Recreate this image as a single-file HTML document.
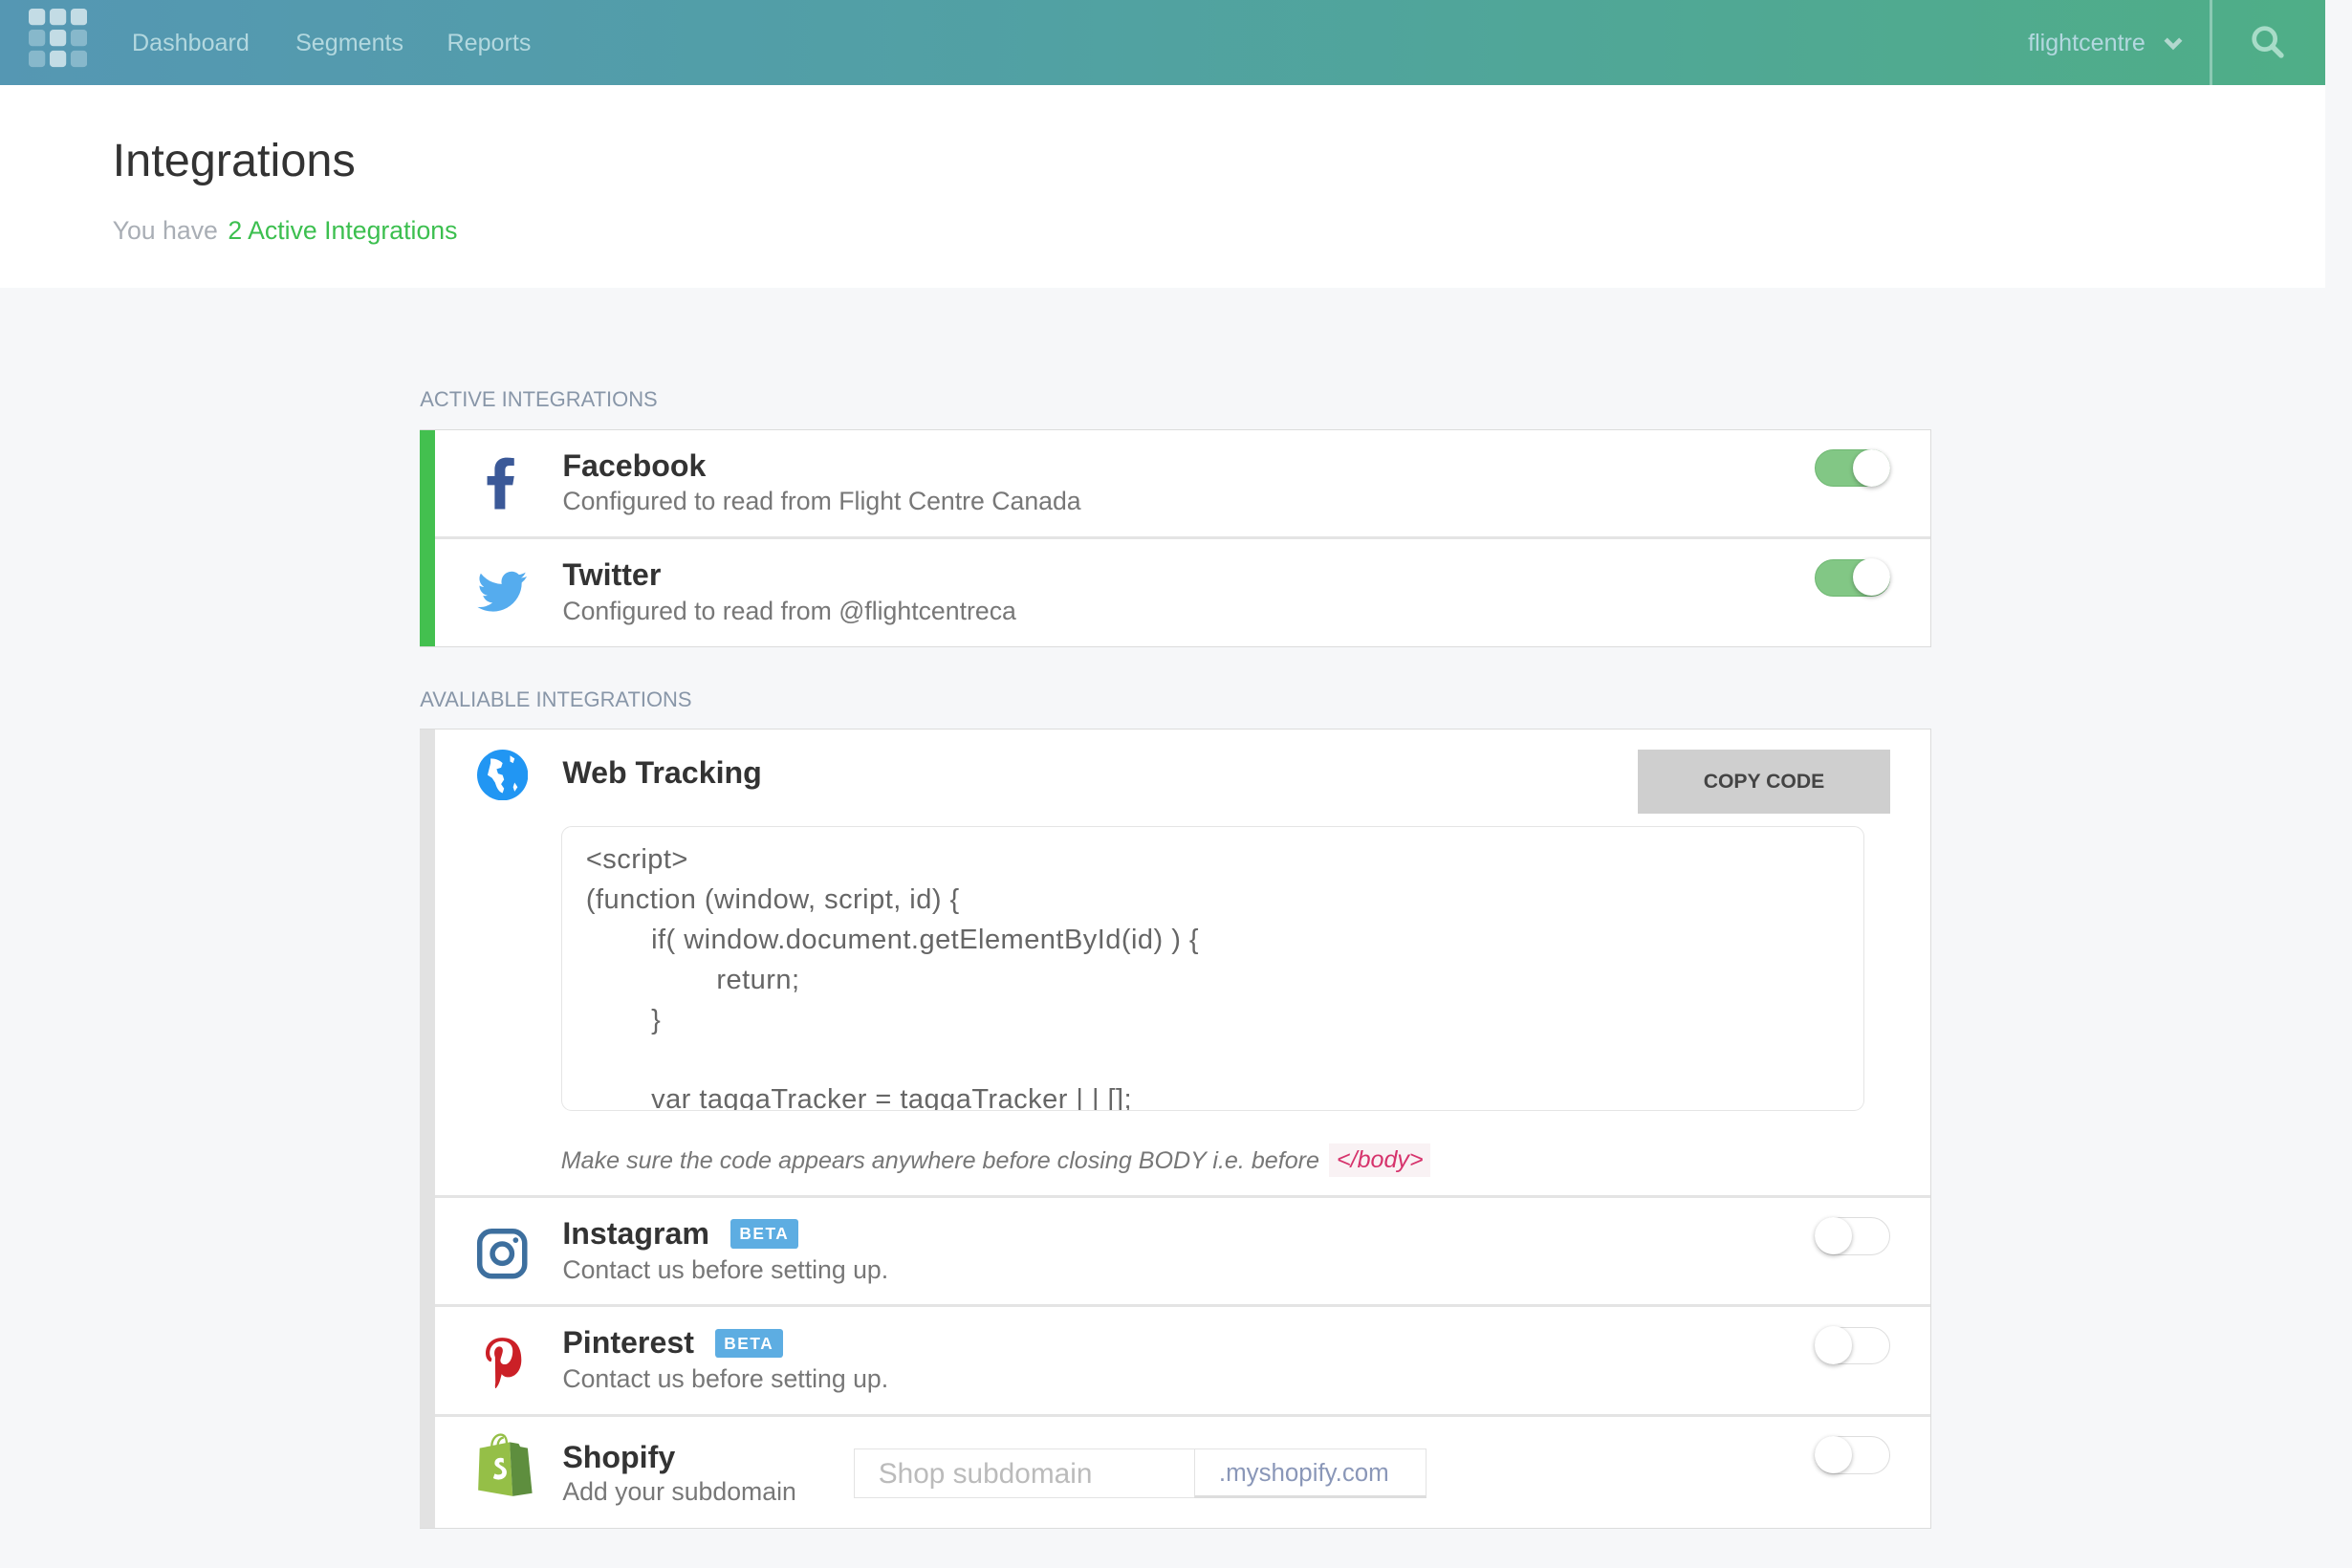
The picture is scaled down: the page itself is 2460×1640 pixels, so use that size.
<!DOCTYPE html>
<html><head><meta charset="utf-8"><style>
html,body{margin:0;padding:0;background:#f6f7f9;width:2460px;height:1640px;overflow:hidden}
#w{zoom:1.568878;width:1568px;height:1045px;position:relative;font-family:"Liberation Sans",sans-serif;color:#333}
.a{position:absolute}
.hdr{left:0;top:0;width:1550px;height:57px;background:linear-gradient(90deg,#5597b3,#51a1a3 45%,#4fae87)}
.nav{color:#b3d8df;font-size:16px;top:20px}
.white{left:0;top:57px;width:1550px;height:135px;background:#fff}
.lbl{font-size:14px;color:#8896a8;left:280px}
.card{left:280px;width:1007px;background:#fff;border:1px solid #dcdcdc;border-left:none}
.bar{left:0;top:0;bottom:0;width:10px}
.row{position:absolute;left:10px;right:0;border-bottom:2px solid #e4e4e4}
.t{position:absolute;left:85px;font-size:20.5px;font-weight:bold;color:#333}
.s{position:absolute;left:85px;font-size:17px;color:#777}
.ic{position:absolute;left:27px;width:36px;height:36px}
.tg{position:absolute;left:920px;width:50px;height:25px;border-radius:13px;box-sizing:border-box}
.tg.on{background:#82c785;border:1px solid #6fb772}
.tg.off{background:#fff;border:1px solid #ddd}
.tg i{position:absolute;top:-1px;width:25px;height:25px;border-radius:50%;background:#fff;box-shadow:0 1px 3px rgba(0,0,0,.3)}
.tg.on i{right:-1px}.tg.off i{left:-1px}
.beta{display:inline-block;background:#5dade2;color:#fff;font-size:11px;font-weight:bold;letter-spacing:1px;padding:3px 6px;border-radius:2px;vertical-align:3px;margin-left:14px}
</style></head><body><div id="w">
<div class="a hdr"></div>
<svg class="a" style="left:19px;top:6px" width="39" height="40" viewBox="0 0 39 40">
<g fill="#c3dce5"><rect x="0" y="0" width="11" height="11" rx="2.5"/><rect x="14" y="0" width="11" height="11" rx="2.5"/><rect x="28" y="0" width="11" height="11" rx="2.5"/><rect x="14" y="14" width="11" height="11" rx="2.5"/><rect x="14" y="28" width="11" height="11" rx="2.5"/></g>
<g fill="#87b8cb"><rect x="0" y="14" width="11" height="11" rx="2.5"/><rect x="28" y="14" width="11" height="11" rx="2.5"/><rect x="0" y="28" width="11" height="11" rx="2.5"/><rect x="28" y="28" width="11" height="11" rx="2.5"/></g></svg>
<div class="a nav" style="left:88px">Dashboard</div>
<div class="a nav" style="left:197px">Segments</div>
<div class="a nav" style="left:298px">Reports</div>
<div class="a nav" style="left:1352px">flightcentre</div>
<svg class="a" style="left:1442px;top:24px" width="14" height="10" viewBox="0 0 14 10"><path d="M2 2l5 5 5-5" stroke="#b3d8cf" stroke-width="3" fill="none"/></svg>
<div class="a" style="left:1473px;top:0;width:2px;height:57px;background:#8ccab4"></div>
<svg class="a" style="left:1500px;top:16px" width="24" height="24" viewBox="0 0 24 24"><circle cx="10" cy="10" r="7" stroke="#a8dcc8" stroke-width="3" fill="none"/><path d="M15 15l6 6" stroke="#a8dcc8" stroke-width="3.5" stroke-linecap="round"/></svg>
<div class="a white"></div>
<div class="a" style="left:75px;top:89px;font-size:31px;color:#333">Integrations</div>
<div class="a" style="left:75px;top:144px;font-size:17px;color:#a9aeb5">You have <span style="color:#3cbf4f;margin-left:2px">2 Active Integrations</span></div>

<div class="a lbl" style="top:258px">ACTIVE INTEGRATIONS</div>
<div class="a card" style="top:286px;height:144px">
<div class="a bar" style="background:#43c04f"></div>
<div class="row" style="top:0;height:71px">
<svg class="ic" style="top:17px" viewBox="0 0 36 36"><path d="M20 36V20h5l1-6h-6v-4c0-2 1-3 3-3h3V2c-1 0-3-.3-5-.3-5 0-8 3-8 8V14H8v6h5v16z" fill="#3b5998"/></svg>
<div class="t" style="top:12px">Facebook</div><div class="s" style="top:38px">Configured to read from Flight Centre Canada</div>
<div class="tg on" style="top:13px"><i></i></div></div>
<div class="row" style="top:73px;height:71px;border-bottom:none">
<svg class="ic" style="top:18px" viewBox="0 0 24 24"><path d="M23 4.6c-.8.4-1.7.6-2.6.7.9-.6 1.6-1.4 2-2.5-.9.5-1.9.9-2.9 1.1A4.5 4.5 0 0 0 11.8 8 12.8 12.8 0 0 1 2.5 3.3a4.5 4.5 0 0 0 1.4 6c-.7 0-1.4-.2-2-.6 0 2.2 1.5 4 3.6 4.4-.7.2-1.4.2-2 .1.6 1.8 2.3 3.1 4.2 3.1A9 9 0 0 1 1 18.2 12.8 12.8 0 0 0 20.7 7.4 9.2 9.2 0 0 0 23 4.6z" fill="#55acee"/></svg>
<div class="t" style="top:12px">Twitter</div><div class="s" style="top:38px">Configured to read from @flightcentreca</div>
<div class="tg on" style="top:13px"><i></i></div></div>
</div>

<div class="a lbl" style="top:458px">AVALIABLE INTEGRATIONS</div>
<div class="a card" style="top:486px;height:532px">
<div class="a bar" style="background:#e2e2e2"></div>
<div class="row" style="top:0;height:310px">
<svg class="ic" style="top:13px;left:28px;width:34px;height:34px" viewBox="0 0 34 34"><circle cx="17" cy="17" r="17" fill="#2196f3"/><path d="M9 6c3 0 6 1 8 3l-1 3-3 1 1 3 3 1 1 3-2 3 2 3-1 3c-3-1-4-4-5-7l-2-3-3-2 1-4 1-4zM22 4l3 2-1 3-2-1zM25 22l2 3-2 3-1-3z" fill="#fff"/></svg>
<div class="t" style="top:17px">Web Tracking</div>
<div class="a" style="left:802px;top:13px;width:168px;height:43px;background:#cfcfcf;color:#444;font-size:13.5px;font-weight:bold;text-align:center;line-height:43px">COPY CODE</div>
<div class="a" style="left:84px;top:64px;width:869px;height:190px;border:1px solid #e5e5e5;border-radius:7px;overflow:hidden;color:#666;font-size:18.5px;line-height:26.7px;box-sizing:border-box;padding:9px 0 0 16px;white-space:pre;letter-spacing:.3px">&lt;script&gt;
(function (window, script, id) {
        if( window.document.getElementById(id) ) {
                return;
        }

        var taggaTracker = taggaTracker | | [];</div>
<div class="a" style="left:84px;top:278px;font-size:16px;font-style:italic;color:#777">Make sure the code appears anywhere before closing BODY i.e. before <span style="background:#f9f2f4;color:#d6336c;padding:2px 5px;margin-left:2px">&lt;/body&gt;</span></div>
</div>
<div class="row" style="top:312px;height:71px">
<svg class="ic" style="top:19px" viewBox="0 0 36 36"><rect x="3" y="3" width="30" height="30" rx="8" stroke="#3d6f9e" stroke-width="3.5" fill="none"/><circle cx="18" cy="18" r="6.5" stroke="#3d6f9e" stroke-width="3.5" fill="none"/><circle cx="27" cy="9" r="1.8" fill="#3d6f9e"/></svg>
<div class="t" style="top:12px">Instagram<span class="beta">BETA</span></div><div class="s" style="top:38px">Contact us before setting up.</div>
<div class="tg off" style="top:13px"><i></i></div></div>
<div class="row" style="top:385px;height:71px">
<svg class="ic" style="top:18px" viewBox="0 0 36 36"><path d="M18 2C10 2 7 8 7 12c0 3 1 5 3 6 .3.1.6 0 .7-.4l.3-1.2c.1-.4 0-.5-.2-.8-.7-.8-1.1-1.8-1.1-3.3 0-4.3 3.2-8 8.3-8 4.6 0 7 2.8 7 6.5 0 4.9-2.2 9-5.4 9-1.8 0-3.1-1.5-2.7-3.3.5-2.1 1.5-4.5 1.5-6 0-1.4-.8-2.6-2.3-2.6-1.8 0-3.3 1.9-3.3 4.4 0 1.6.5 2.7.5 2.7L13.5 32c-.4 1.7-.2 3.5 0 4 1.2-1 2.5-3.5 3-5.3l1.2-4.5c.6 1.1 2.3 2.1 4.1 2.1 5.4 0 9-4.9 9-11.5C30.8 6.8 25.6 2 18 2z" fill="#cb2027"/></svg>
<div class="t" style="top:12px">Pinterest<span class="beta">BETA</span></div><div class="s" style="top:38px">Contact us before setting up.</div>
<div class="tg off" style="top:13px"><i></i></div></div>
<div class="row" style="top:458px;height:74px;border-bottom:none">
<svg class="ic" style="top:11px;left:27px;width:38px;height:44px" viewBox="0 0 38 44"><path d="M3 10l20-4 2 36-23-4z" fill="#95bf47"/><path d="M23 6l6 1 1 2 5 1 3 30-13 2z" fill="#5e8e3e"/><path d="M11 9c0-5 3-8 6-8s4 3 4 6M15 9c0-4 2-6 4-6" stroke="#95bf47" stroke-width="1.5" fill="none"/><path d="M19 17c-1-1-6-1-6 3 0 3 5 3 5 6 0 2-3 2-5 1l-1 3c3 2 9 1 9-4 0-4-5-4-5-6 0-1 2-1 3 0z" fill="#fff"/></svg>
<div class="t" style="top:15px">Shopify</div><div class="s" style="top:40px">Add your subdomain</div>
<div class="a" style="left:279px;top:21px;width:228px;height:33px;border:1px solid #e3e3e3;box-sizing:border-box;font-size:19px;color:#bbb;padding:6px 0 0 16px">Shop subdomain</div>
<div class="a" style="left:506px;top:21px;width:155px;height:33px;border:1px solid #e3e3e3;border-bottom:2px solid #ddd;box-sizing:border-box;font-size:16.5px;color:#8a97b8;padding:7px 0 0 16px">.myshopify.com</div>
<div class="tg off" style="top:13px"><i></i></div></div>
</div>
</div></body></html>
